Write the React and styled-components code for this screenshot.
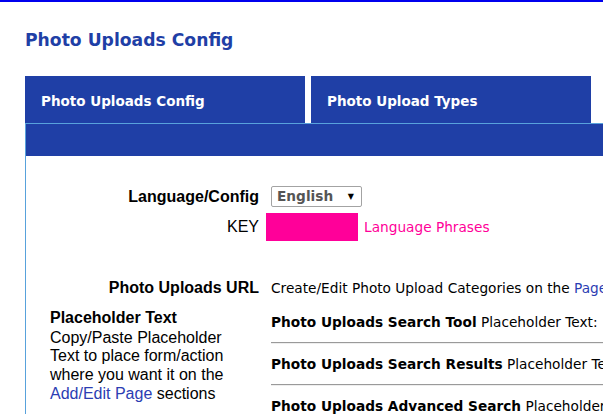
import React from 'react';
import styled, { createGlobalStyle } from 'styled-components';

const Global = createGlobalStyle`
  html, body { margin: 0; padding: 0; background: #fff; overflow: hidden; }
  body { font-family: "DejaVu Sans", Verdana, sans-serif; color: #000; }
`;

const BLUE = '#1f3fa6';
const LIGHT = '#58a2dc';
const PINK = '#ff0099';
const LINK = '#2b3db3';

const Page = styled.div`
  border-top: 2px solid #0000ee;
  padding: 28px 0 0 25px;
  width: 1400px;
`;

const Title = styled.h1`
  margin: 0;
  font: bold 17.2px/20px "DejaVu Sans", Verdana, sans-serif;
  color: ${BLUE};
`;

const Tabs = styled.div`
  display: flex;
  gap: 6px;
  margin-top: 26px;
`;

const Tab = styled.div`
  box-sizing: border-box;
  width: 280px;
  height: 47px;
  padding: 17px 16px 0;
  background: ${BLUE};
  color: #fff;
  font: bold 13.5px/16px "DejaVu Sans", Verdana, sans-serif;
`;

const Panel = styled.div`
  border-top: 1px solid ${LIGHT};
  border-left: 1px solid ${LIGHT};
  min-height: 400px;
`;

const Bar = styled.div`
  height: 32px;
  background: ${BLUE};
`;

const Row = styled.div`
  display: grid;
  grid-template-columns: 233px 1fr;
  column-gap: 12px;
  align-items: ${p => p.$align || 'center'};
  margin-top: ${p => p.$top}px;
  min-height: ${p => p.$height || 0}px;
`;

const Label = styled.div`
  text-align: right;
  font-family: "Liberation Sans", Arial, sans-serif;
  font-size: 16px;
  line-height: ${p => p.$lh || 19}px;
  font-weight: ${p => (p.$bold ? 'bold' : 'normal')};
  white-space: nowrap;
`;

const Select = styled.div`
  box-sizing: border-box;
  width: 91px;
  height: 21px;
  border: 1px solid #a3a3a3;
  border-radius: 2px;
  background: #fff;
  display: flex;
  align-items: center;
  justify-content: space-between;
  padding: 0 7px 0 5px;
  font: bold 13.7px/19px "DejaVu Sans", Verdana, sans-serif;
  color: #555;
`;

const Arrow = styled.span`
  font-size: 8px;
  color: #000;
  line-height: 1;
`;

const KeyWrap = styled.div`
  display: flex;
  align-items: center;
  gap: 6px;
  margin-left: -5px;
`;

const Swatch = styled.div`
  width: 92px;
  height: 28px;
  background: ${PINK};
`;

const PinkText = styled.span`
  color: ${PINK};
  font: 13.7px/16px "DejaVu Sans", Verdana, sans-serif;
`;

const Text = styled.div`
  font: 13.7px/19px "DejaVu Sans", Verdana, sans-serif;
  white-space: nowrap;
`;

const Link = styled.a`
  color: ${LINK};
  text-decoration: none;
`;

const Help = styled.div`
  padding: 0 20px 0 24px;
  font: 16px/18.7px "Liberation Sans", Arial, sans-serif;
`;

const HelpTitle = styled.div`
  font-weight: bold;
  margin-bottom: 1px;
`;

const List = styled.div`
  padding-top: 4.5px;
`;

const Item = styled.div`
  font: 13.7px/16px "DejaVu Sans", Verdana, sans-serif;
  white-space: nowrap;
  b { font-weight: bold; }
`;

const Rule = styled.hr`
  margin: 12px 0;
  border: 0;
  border-top: 1px solid #9a9a9a;
  border-bottom: 1px solid #eeeeee;
  height: 0;
`;

const items = [
  ['Photo Uploads Search Tool', '{{photo_uploads_search_tool}}'],
  ['Photo Uploads Search Results', '{{photo_uploads_search_results}}'],
  ['Photo Uploads Advanced Search', '{{photo_uploads_advanced_search}}'],
];

export default function App() {
  return (
    <>
      <Global />
      <Page>
        <Title>Photo Uploads Config</Title>
        <Tabs>
          <Tab>Photo Uploads Config</Tab>
          <Tab>Photo Upload Types</Tab>
        </Tabs>
        <Panel>
          <Bar />
          <Row $top={30} $height={21}>
            <Label $bold $lh={21}>Language/Config</Label>
            <div>
              <Select>
                <span>English</span>
                <Arrow>▼</Arrow>
              </Select>
            </div>
          </Row>
          <Row $top={6} $height={28}>
            <Label $lh={28}>KEY</Label>
            <KeyWrap>
              <Swatch />
              <PinkText>Language Phrases</PinkText>
            </KeyWrap>
          </Row>
          <Row $top={37} $align="baseline">
            <Label $bold>Photo Uploads URL</Label>
            <Text>
              Create/Edit Photo Upload Categories on the <Link>Pages</Link> tab of the Admin area
            </Text>
          </Row>
          <Row $top={11} $align="start">
            <Help>
              <HelpTitle>Placeholder Text</HelpTitle>
              Copy/Paste Placeholder Text to place form/action where you want it on the{' '}
              <Link>Add/Edit Page</Link> sections
            </Help>
            <List>
              {items.map(([name, code], i) => (
                <React.Fragment key={name}>
                  {i > 0 && <Rule />}
                  <Item>
                    <b>{name}</b> Placeholder Text: {code}
                  </Item>
                </React.Fragment>
              ))}
            </List>
          </Row>
        </Panel>
      </Page>
    </>
  );
}
